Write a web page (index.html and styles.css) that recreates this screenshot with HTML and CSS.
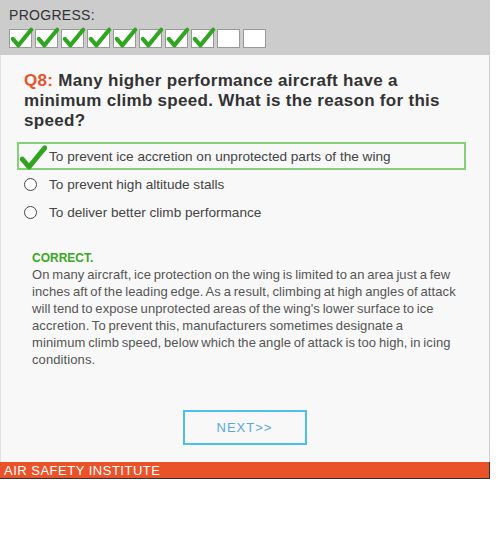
FILE: index.html
```html
<!DOCTYPE html>
<html lang="en">
<head>
    <meta charset="UTF-8">
    <meta name="viewport" content="width=device-width, initial-scale=1.0">
    <title>Quiz - Question 8</title>
    <link rel="stylesheet" href="styles.css">
</head>
<body>
    <div class="quiz">
        <div class="progress">
            <div class="progress-label">PROGRESS:</div>
            <div class="progress-boxes">
                <span class="box done"><svg viewBox="0 0 24 24"><path d="M2 13 L8 20 L22 3" /></svg></span>
                <span class="box done"><svg viewBox="0 0 24 24"><path d="M2 13 L8 20 L22 3" /></svg></span>
                <span class="box done"><svg viewBox="0 0 24 24"><path d="M2 13 L8 20 L22 3" /></svg></span>
                <span class="box done"><svg viewBox="0 0 24 24"><path d="M2 13 L8 20 L22 3" /></svg></span>
                <span class="box done"><svg viewBox="0 0 24 24"><path d="M2 13 L8 20 L22 3" /></svg></span>
                <span class="box done"><svg viewBox="0 0 24 24"><path d="M2 13 L8 20 L22 3" /></svg></span>
                <span class="box done"><svg viewBox="0 0 24 24"><path d="M2 13 L8 20 L22 3" /></svg></span>
                <span class="box done"><svg viewBox="0 0 24 24"><path d="M2 13 L8 20 L22 3" /></svg></span>
                <span class="box"></span>
                <span class="box"></span>
            </div>
        </div>

        <div class="content">
            <h2 class="question"><span class="qnum">Q8:</span> Many higher performance aircraft have a minimum climb speed. What is the reason for this speed?</h2>

            <ul class="answers">
                <li class="answer selected">
                    <svg class="big-check" viewBox="0 0 24 24"><path d="M2 13 L8 20 L22 3" /></svg>
                    <span>To prevent ice accretion on unprotected parts of the wing</span>
                </li>
                <li class="answer">
                    <span class="radio"></span>
                    <span>To prevent high altitude stalls</span>
                </li>
                <li class="answer">
                    <span class="radio"></span>
                    <span>To deliver better climb performance</span>
                </li>
            </ul>

            <div class="feedback">
                <div class="feedback-title">CORRECT.</div>
                <p>On many aircraft, ice protection on the wing is limited to an area just a few inches aft of the leading edge. As a result, climbing at high angles of attack will tend to expose unprotected areas of the wing's lower surface to ice accretion. To prevent this, manufacturers sometimes designate a minimum climb speed, below which the angle of attack is too high, in icing conditions.</p>
            </div>

            <div class="actions">
                <button class="next-btn">NEXT&gt;&gt;</button>
            </div>
        </div>

        <div class="footer">AIR SAFETY INSTITUTE</div>
    </div>
</body>
</html>
```

FILE: styles.css
```css
body {
    margin: 0;
    font-family: 'Liberation Sans', Arial, sans-serif;
    background: #fff;
    color: #333;
}

.quiz {
    width: 490px;
}

/* Progress header */
.progress {
    background: #cccccc;
    height: 55px;
    box-sizing: border-box;
    padding: 7px 0 0 9px;
}

.progress-label {
    font-size: 14px;
    line-height: 17px;
    color: #333;
    letter-spacing: 0.3px;
}

.progress-boxes {
    display: flex;
    gap: 3px;
    margin-top: 5px;
}

.box {
    width: 21px;
    height: 17px;
    background: #fff;
    border: 1px solid #9a9a9a;
    position: relative;
}

.box svg {
    position: absolute;
    left: 0;
    top: -3px;
    width: 24px;
    height: 22px;
}

svg path {
    fill: none;
    stroke: #2fa520;
    stroke-width: 4.5;
    stroke-linecap: round;
    stroke-linejoin: round;
}

/* Main content */
.content {
    background: #f8f8f8;
    border-right: 1px solid #cfcfcf;
    border-left: 1px solid #e2e2e2;
    padding: 16px 0 17px;
}

.question {
    margin: 0 30px 0 23px;
    font-size: 17px;
    line-height: 20px;
    letter-spacing: 0.3px;
    font-weight: bold;
    color: #333;
}

.qnum {
    color: #e8532b;
}

.answers {
    list-style: none;
    margin: 11px 0 0 16px;
    padding: 0;
    width: 449px;
}

.answer {
    display: flex;
    align-items: center;
    height: 28px;
    box-sizing: border-box;
    font-size: 13.6px;
    color: #444;
    padding-left: 32px;
    position: relative;
}

.answer.selected {
    border: 2px solid #86cf79;
    height: 28px;
    padding-left: 30px;
}

.big-check {
    position: absolute;
    left: 1px;
    top: -1px;
    width: 27px;
    height: 30px;
}

.big-check path {
    stroke-width: 4.4;
}

.radio {
    position: absolute;
    left: 7px;
    top: 8px;
    width: 11px;
    height: 11px;
    border: 1px solid #444;
    border-radius: 50%;
    background: #fff;
}

/* Feedback */
.feedback {
    margin: 25px 0 0 31px;
    width: 425px;
}

.feedback-title {
    font-size: 12px;
    font-weight: bold;
    color: #3aa81e;
    line-height: 15px;
}

.feedback p {
    margin: 0;
    font-size: 13px;
    line-height: 17px;
    letter-spacing: 0.1px;
    word-spacing: -1px;
    color: #555;
}

/* Next button */
.actions {
    display: flex;
    justify-content: center;
    margin-top: 42px;
    padding-right: 1px;
}

.next-btn {
    width: 124px;
    height: 35px;
    background: transparent;
    border: 2px solid #4cc0ea;
    color: #5aa8dc;
    font-family: 'Liberation Sans', Arial, sans-serif;
    font-size: 13px;
    letter-spacing: 1px;
    cursor: pointer;
}

/* Footer */
.footer {
    background: #ea522a;
    color: #fff;
    font-size: 13px;
    line-height: 15px;
    letter-spacing: 0.5px;
    padding: 1px 4px 0;
    border-right: 1px solid #333;
    border-bottom: 1px solid #333;
}
```
